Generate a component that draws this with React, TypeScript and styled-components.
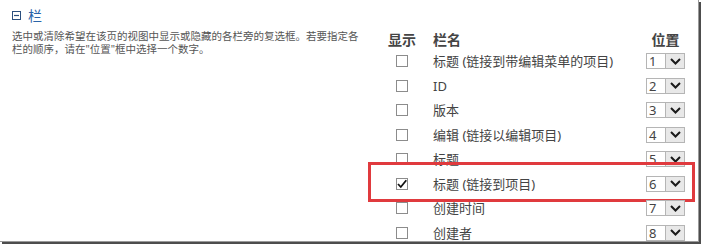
import React from 'react'
import styled, { createGlobalStyle, css } from 'styled-components'

const GlobalStyle = createGlobalStyle`
  html, body {
    margin: 0;
    padding: 0;
    background: #fff;
  }
`

const columns = [
  { name: '标题 (链接到带编辑菜单的项目)', checked: false },
  { name: 'ID', checked: false },
  { name: '版本', checked: false },
  { name: '编辑 (链接以编辑项目)', checked: false },
  { name: '标题', checked: false },
  { name: '标题 (链接到项目)', checked: true, highlighted: true },
  { name: '创建时间', checked: false },
  { name: '创建者', checked: false },
]

const Chevron = () => (
  <svg width="11" height="7" viewBox="0 0 11 7">
    <path d="M1 1 L5.5 5.5 L10 1" fill="none" stroke="#1a1a1a" strokeWidth="2" />
  </svg>
)

const CheckMark = () => (
  <svg width="12" height="12" viewBox="0 0 12 12">
    <path d="M2 6 L4.8 9 L10.3 2.3" fill="none" stroke="#111" strokeWidth="1.8" />
  </svg>
)

const App = () => {
  return (
    <>
      <GlobalStyle />
      <Page>
        <Frame>
          <Intro>
            <SectionTitle>
              <CollapseIcon>
                <svg width="9" height="9" viewBox="0 0 9 9">
                  <rect x="0.5" y="0.5" width="8" height="8" fill="none" stroke="#2b4f7e" />
                  <path d="M2 4.5 H7" stroke="#2b4f7e" strokeWidth="1.2" />
                </svg>
              </CollapseIcon>
              栏
            </SectionTitle>
            <Description>
              选中或清除希望在该页的视图中显示或隐藏的各栏旁的复选框。若要指定各栏的顺序，请在"位置"框中选择一个数字。
            </Description>
          </Intro>
          <Table>
            <HeaderRow>
              <ShowCell>显示</ShowCell>
              <NameCell>栏名</NameCell>
              <PosCell>位置</PosCell>
            </HeaderRow>
            {columns.map((col, i) => (
              <Row key={i} highlighted={col.highlighted}>
                <ShowCell>
                  <Checkbox>{col.checked && <CheckMark />}</Checkbox>
                </ShowCell>
                <NameCell>{col.name}</NameCell>
                <PosCell>
                  <Select>
                    <SelectValue>{i + 1}</SelectValue>
                    <SelectArrow>
                      <Chevron />
                    </SelectArrow>
                  </Select>
                </PosCell>
              </Row>
            ))}
          </Table>
        </Frame>
      </Page>
    </>
  )
}

// screenshot canvas with the drop shadow of the captured window
const Page = styled.div`
  width: 704px;
  height: 247px;
  overflow: hidden;
  background: #fff;
`

const Frame = styled.div`
  width: 699px;
  height: 242px;
  box-sizing: border-box;
  background: #fff;
  border-right: 1px solid #9a9a9a;
  border-bottom: 1px solid #9a9a9a;
  box-shadow: 2px 2px 0 #4d4d4d;
  display: grid;
  grid-template-columns: 380px 1fr;
  grid-template-rows: 241px;
  padding-right: 13px;
  font-family: 'Noto Sans', 'Noto Sans CJK SC', sans-serif;
  overflow: hidden;
`

const Intro = styled.div`
  padding: 7px 0 0 12px;
`

const SectionTitle = styled.div`
  display: flex;
  align-items: center;
  gap: 7px;
  height: 16px;
  font-size: 14px;
  color: #2a64a8;
`

const CollapseIcon = styled.span`
  display: flex;
  align-items: center;
`

const Description = styled.div`
  width: 352px;
  margin-top: 7px;
  font-size: 10.5px;
  line-height: 13px;
  color: #555;
`

const Table = styled.div`
  padding-top: 28px;
  display: flex;
  flex-direction: column;
  min-height: 0;
`

const rowGrid = css`
  display: grid;
  grid-template-columns: 44px 1fr 39px;
  align-items: center;
  flex-shrink: 0;
`

const HeaderRow = styled.div`
  ${rowGrid};
  height: 21px;
  font-size: 14px;
  font-weight: 600;
  color: #444;
`

const Row = styled.div<{ highlighted?: boolean }>`
  ${rowGrid};
  position: relative;
  height: 24.5px;
  font-size: 13px;
  line-height: 16px;
  color: #444;

  ${p =>
    p.highlighted &&
    css`
      &::after {
        content: '';
        position: absolute;
        left: -12px;
        right: -10px;
        top: -10px;
        bottom: -6px;
        border: 3px solid #e03a3e;
        pointer-events: none;
      }
    `}
`

const ShowCell = styled.div`
  display: flex;
  justify-content: center;
`

const NameCell = styled.div`
  padding-left: 9px;
  white-space: nowrap;
`

const PosCell = styled.div`
  display: flex;
  justify-content: center;
  white-space: nowrap;
`

const Checkbox = styled.span`
  width: 12px;
  height: 12px;
  box-sizing: border-box;
  border: 1px solid #8c8c8c;
  background: #fff;
  display: flex;
  align-items: center;
  justify-content: center;

  svg {
    margin: -1px;
  }
`

const Select = styled.div`
  display: flex;
  height: 16px;
`

const SelectValue = styled.span`
  width: 19px;
  box-sizing: border-box;
  border: 1px solid #b5b5b5;
  border-right: none;
  font-size: 13px;
  line-height: 14px;
  padding-left: 2px;
  color: #444;
  background: #fff;
`

const SelectArrow = styled.span`
  width: 20px;
  box-sizing: border-box;
  border: 1px solid #b5b5b5;
  background: #e8e8e8;
  display: flex;
  align-items: center;
  justify-content: center;
`

export default App
